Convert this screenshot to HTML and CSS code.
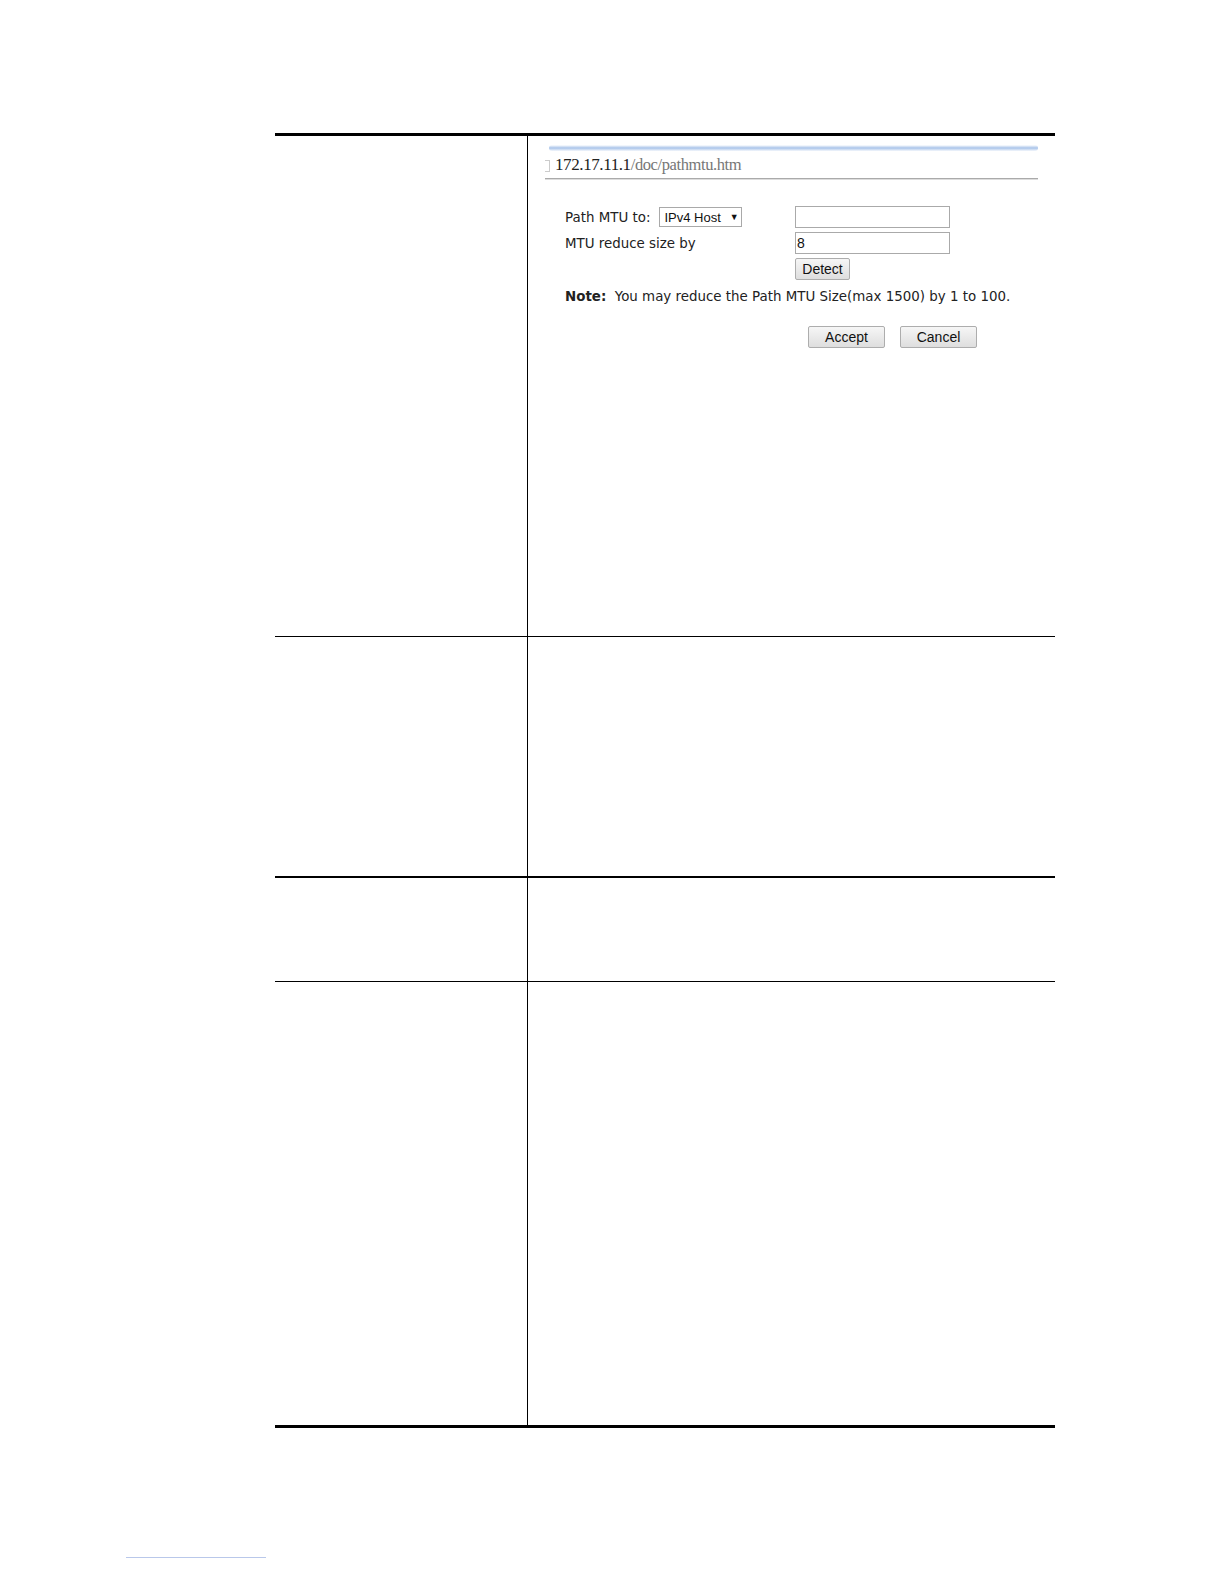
FILE: index.html
```html
<!DOCTYPE html>
<html>
<head>
<meta charset="utf-8">
<link rel="stylesheet" href="styles.css">
</head>
<body>
<div class="page">
  <div class="table">
    <div class="row row1">
      <div class="cell left"></div>
      <div class="cell right">
        <div class="shot">
          <div class="addr">
            <div class="glow"></div>
            <div class="url"><span class="doc-ico"></span><span class="host">172.17.11.1</span><span class="path">/doc/pathmtu.htm</span></div>
            <div class="addr-line"></div>
          </div>
          <div class="form">
            <div class="frow">
              <div class="flabel">Path MTU to: <span class="select">IPv4 Host <span class="arrow">▼</span></span></div>
              <div class="input"></div>
            </div>
            <div class="frow">
              <div class="flabel">MTU reduce size by</div>
              <div class="input">8</div>
            </div>
            <div class="frow">
              <div class="flabel"></div>
              <div class="btn detect">Detect</div>
            </div>
            <div class="note"><b>Note:</b>&nbsp; You may reduce the Path MTU Size(max 1500) by 1 to 100.</div>
            <div class="actions">
              <div class="btn accept">Accept</div>
              <div class="btn cancel">Cancel</div>
            </div>
          </div>
        </div>
      </div>
    </div>
    <div class="row row2">
      <div class="cell left"></div>
      <div class="cell right"></div>
    </div>
    <div class="row row3">
      <div class="cell left"></div>
      <div class="cell right"></div>
    </div>
    <div class="row row4">
      <div class="cell left"></div>
      <div class="cell right"></div>
    </div>
  </div>
  <div class="footer"><span class="footlink"></span></div>
</div>
</body>
</html>
```
FILE: styles.css
```css
html, body {
  margin: 0;
  padding: 0;
  background: #fff;
}
.page {
  width: 1224px;
  height: 1584px;
  position: relative;
  padding-top: 133px;
  box-sizing: border-box;
  font-family: "DejaVu Sans", Verdana, sans-serif;
}
.table {
  margin-left: 275px;
  width: 780px;
  border-top: 3px solid #000;
  border-bottom: 3px solid #000;
}
.row {
  display: grid;
  grid-template-columns: 253px 1fr;
}
.row1 { height: 500px; border-bottom: 1px solid #000; }
.row2 { height: 239px; border-bottom: 2px solid #000; }
.row3 { height: 103px; border-bottom: 1px solid #000; }
.row4 { height: 443px; }
.cell.left {
  border-right: 1px solid #000;
}
.shot {
  padding: 9px 14px 0 17px;
}
.addr {
  width: 495px;
}
.glow {
  height: 6px;
  background: linear-gradient(to bottom, rgba(160,190,230,0) 0%, #a9c4ea 50%, rgba(200,215,240,0.2) 100%);
  border-radius: 3px;
  margin: 0 2px 0 4px;
  filter: blur(0.6px);
}
.url {
  height: 27px;
  display: flex;
  align-items: center;
  font-family: "Liberation Serif", "Times New Roman", serif;
  font-size: 17px;
  letter-spacing: -0.4px;
}
.doc-ico {
  width: 4px;
  height: 10px;
  border: 1px solid #ccc;
  border-left: none;
  margin-right: 5px;
  margin-top: 3px;
}
.host { color: #222; }
.path { color: #777; font-size: 16.5px; }
.addr-line {
  height: 1px;
  background: #aaa;
  border-bottom: 1px solid #ddd;
  margin-right: 2px;
}
.form {
  padding: 24px 0 0 20px;
  font-size: 13.4px;
  color: #222;
}
.frow {
  display: flex;
  align-items: center;
  height: 26px;
}
.flabel {
  width: 230px;
  display: flex;
  align-items: center;
  white-space: nowrap;
}
.select {
  display: inline-flex;
  align-items: center;
  margin-left: 9px;
  width: 83px;
  height: 20px;
  box-sizing: border-box;
  border: 1px solid #a9a9a9;
  padding-left: 4px;
  font-family: "Liberation Sans", Arial, sans-serif;
  font-size: 13px;
  color: #111;
}
.arrow {
  font-size: 9px;
  margin-left: 9px;
}
.input {
  width: 155px;
  height: 22px;
  box-sizing: border-box;
  border: 1px solid #aaa;
  font-family: "Liberation Sans", Arial, sans-serif;
  font-size: 14px;
  padding-left: 1px;
  line-height: 20px;
  color: #111;
}
.btn {
  box-sizing: border-box;
  height: 22px;
  border: 1px solid #adadad;
  border-radius: 2px;
  background: linear-gradient(#f6f6f6, #dedede);
  font-family: "Liberation Sans", Arial, sans-serif;
  font-size: 14px;
  color: #111;
  display: flex;
  align-items: center;
  justify-content: center;
}
.detect { width: 55px; }
.note {
  margin-top: 2px;
  height: 26px;
  line-height: 26px;
  font-size: 13.4px;
}
.note b { font-weight: bold; }
.actions {
  display: flex;
  gap: 15px;
  padding-left: 243px;
  margin-top: 16px;
}
.accept { width: 77px; }
.cancel { width: 77px; }
.footer {
  position: absolute;
  left: 126px;
  top: 1557px;
}
.footlink {
  display: block;
  width: 140px;
  height: 1px;
  background: #b9c8ea;
}
```
